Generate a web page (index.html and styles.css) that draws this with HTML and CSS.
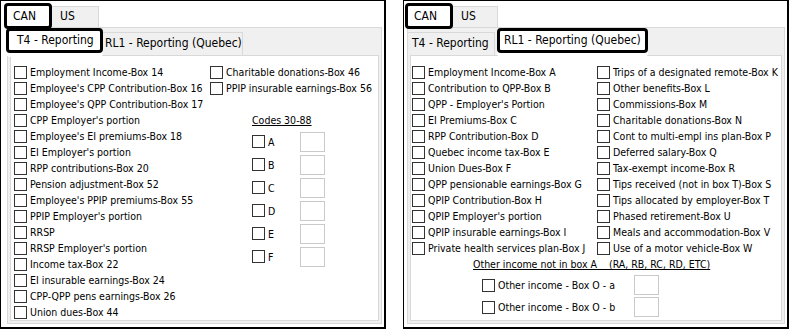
FILE: index.html
```html
<!DOCTYPE html>
<html lang="en">
<head>
    <meta charset="UTF-8">
    <meta name="viewport" content="width=device-width, initial-scale=1.0">
    <title>Reporting options</title>
    <link rel="stylesheet" href="styles.css">
</head>
<body>
    <div class="screens">

        <!-- T4 tab selected -->
        <div class="panel panel-t4">
            <div class="tabs">
                <div class="tab active tab-can">CAN</div>
                <div class="tab tab-us">US</div>
            </div>
            <div class="page">
                <div class="tabs sub">
                    <div class="tab active tab-t4">T4 - Reporting</div>
                    <div class="tab tab-rl1">RL1 - Reporting (Quebec)</div>
                </div>
                <div class="subpage">
                    <div class="col">
                        <label class="row"><span class="cb"></span>Employment Income-Box 14</label>
                        <label class="row"><span class="cb"></span>Employee's CPP Contribution-Box 16</label>
                        <label class="row"><span class="cb"></span>Employee's QPP Contribution-Box 17</label>
                        <label class="row"><span class="cb"></span>CPP Employer's portion</label>
                        <label class="row"><span class="cb"></span>Employee's EI premiums-Box 18</label>
                        <label class="row"><span class="cb"></span>EI Employer's portion</label>
                        <label class="row"><span class="cb"></span>RPP contributions-Box 20</label>
                        <label class="row"><span class="cb"></span>Pension adjustment-Box 52</label>
                        <label class="row"><span class="cb"></span>Employee's PPIP premiums-Box 55</label>
                        <label class="row"><span class="cb"></span>PPIP Employer's portion</label>
                        <label class="row"><span class="cb"></span>RRSP</label>
                        <label class="row"><span class="cb"></span>RRSP Employer's portion</label>
                        <label class="row"><span class="cb"></span>Income tax-Box 22</label>
                        <label class="row"><span class="cb"></span>EI insurable earnings-Box 24</label>
                        <label class="row"><span class="cb"></span>CPP-QPP pens earnings-Box 26</label>
                        <label class="row"><span class="cb"></span>Union dues-Box 44</label>
                    </div>
                    <div class="col">
                        <label class="row"><span class="cb"></span>Charitable donations-Box 46</label>
                        <label class="row"><span class="cb"></span>PPIP insurable earnings-Box 56</label>
                        <div class="codes">
                            <div class="codes-title">Codes 30-88</div>
                            <div class="code-row"><label class="row"><span class="cb"></span>A</label><span class="field"></span></div>
                            <div class="code-row"><label class="row"><span class="cb"></span>B</label><span class="field"></span></div>
                            <div class="code-row"><label class="row"><span class="cb"></span>C</label><span class="field"></span></div>
                            <div class="code-row"><label class="row"><span class="cb"></span>D</label><span class="field"></span></div>
                            <div class="code-row"><label class="row"><span class="cb"></span>E</label><span class="field"></span></div>
                            <div class="code-row"><label class="row"><span class="cb"></span>F</label><span class="field"></span></div>
                        </div>
                    </div>
                </div>
            </div>
        </div>

        <!-- RL1 tab selected -->
        <div class="panel panel-rl1">
            <div class="tabs">
                <div class="tab active tab-can">CAN</div>
                <div class="tab tab-us">US</div>
            </div>
            <div class="page">
                <div class="tabs sub">
                    <div class="tab tab-t4">T4 - Reporting</div>
                    <div class="tab active tab-rl1">RL1 - Reporting (Quebec)</div>
                </div>
                <div class="subpage">
                    <div class="col">
                        <label class="row"><span class="cb"></span>Employment Income-Box A</label>
                        <label class="row"><span class="cb"></span>Contribution to QPP-Box B</label>
                        <label class="row"><span class="cb"></span>QPP - Employer's Portion</label>
                        <label class="row"><span class="cb"></span>EI Premiums-Box C</label>
                        <label class="row"><span class="cb"></span>RPP Contribution-Box D</label>
                        <label class="row"><span class="cb"></span>Quebec income tax-Box E</label>
                        <label class="row"><span class="cb"></span>Union Dues-Box F</label>
                        <label class="row"><span class="cb"></span>QPP pensionable earnings-Box G</label>
                        <label class="row"><span class="cb"></span>QPIP Contribution-Box H</label>
                        <label class="row"><span class="cb"></span>QPIP Employer's portion</label>
                        <label class="row"><span class="cb"></span>QPIP insurable earnings-Box I</label>
                        <label class="row"><span class="cb"></span>Private health services plan-Box J</label>
                    </div>
                    <div class="col">
                        <label class="row"><span class="cb"></span>Trips of a designated remote-Box K</label>
                        <label class="row"><span class="cb"></span>Other benefits-Box L</label>
                        <label class="row"><span class="cb"></span>Commissions-Box M</label>
                        <label class="row"><span class="cb"></span>Charitable donations-Box N</label>
                        <label class="row"><span class="cb"></span>Cont to multi-empl ins plan-Box P</label>
                        <label class="row"><span class="cb"></span>Deferred salary-Box Q</label>
                        <label class="row"><span class="cb"></span>Tax-exempt income-Box R</label>
                        <label class="row"><span class="cb"></span>Tips received (not in box T)-Box S</label>
                        <label class="row"><span class="cb"></span>Tips allocated by employer-Box T</label>
                        <label class="row"><span class="cb"></span>Phased retirement-Box U</label>
                        <label class="row"><span class="cb"></span>Meals and accommodation-Box V</label>
                        <label class="row"><span class="cb"></span>Use of a motor vehicle-Box W</label>
                    </div>
                    <div class="other">
                        <div class="other-title">Other income not in box A    (RA, RB, RC, RD, ETC)</div>
                        <div class="other-row"><label class="row"><span class="cb"></span>Other income - Box O - a</label><span class="field"></span></div>
                        <div class="other-row"><label class="row"><span class="cb"></span>Other income - Box O - b</label><span class="field"></span></div>
                    </div>
                </div>
            </div>
        </div>

    </div>
</body>
</html>
```

FILE: styles.css
```css
body {
    margin: 0;
    font-family: "DejaVu Sans Condensed", "DejaVu Sans", sans-serif;
    font-size: 10.5px;
    color: #000;
    background: #fff;
}
.screens {
    display: flex;
    gap: 17px;
}
.panel {
    box-sizing: border-box;
    width: 386px;
    height: 329px;
    border: 1px solid #000;
    border-right-width: 2px;
    border-bottom-width: 2px;
    display: flex;
    flex-direction: column;
}

/* tab strips */
.tabs {
    display: flex;
    align-items: flex-end;
    padding: 2px 0 0 3px;
}
.tab {
    box-sizing: border-box;
    height: 21px;
    line-height: 19px;
    font-size: 12px;
    background: #f0f0f0;
    border: 1px solid #d9d9d9;
    border-bottom: none;
    padding: 0 0 0 8px;
    white-space: nowrap;
}
.tab.active {
    position: relative;
    z-index: 1;
    height: 26px;
    line-height: 20px;
    margin-bottom: -2px;
    background: #fff;
    border: 3px solid #000;
    border-radius: 4px;
    padding-left: 6px;
}
.tab-can { width: 48px; margin-right: -1px; }
.tab-us { width: 48px; }

.page {
    flex: 1;
    display: flex;
    flex-direction: column;
    margin: 0 2px 3px 6px;
    border: 1px solid #d9d9d9;
    background: #f0f0f0;
}
.tabs.sub {
    padding: 0;
    margin-left: -2px;
    height: 27px;
}
.sub .tab {
    height: 23px;
    line-height: 21px;
}
.sub .tab.active {
    height: 25px;
    line-height: 19px;
    margin-bottom: 2px;
    box-shadow: 0 4px 0 #fff;
}

.subpage {
    flex: 1;
    display: grid;
    grid-template-columns: 196px auto;
    align-content: start;
    margin: 0 2px 2px 2px;
    padding: 8px 0 0 3px;
    border: 1px solid #d9d9d9;
    background: #fff;
}

/* checkbox rows */
.row {
    display: flex;
    align-items: center;
    gap: 3px;
    height: 16px;
    white-space: nowrap;
}
.cb {
    flex: none;
    width: 11px;
    height: 11px;
    border: 1px solid #333;
    background: #fff;
}
.field {
    box-sizing: border-box;
    width: 25px;
    height: 20px;
    border: 1px solid #cacaca;
    background: #fff;
}

/* T4 codes block */
.codes {
    margin: 16px 0 0 42px;
}
.codes-title {
    height: 16px;
    line-height: 16px;
    text-decoration: underline;
    margin-bottom: 2px;
}
.code-row {
    display: flex;
    align-items: center;
    height: 23px;
}
.code-row .row {
    width: 48px;
}

/* T4 panel tabs */
.panel-t4 .tab-t4 { width: 97px; padding-left: 8px; }
.panel-t4 .tab-rl1 { width: 141px; margin-left: -1px; padding-left: 2px; }

/* RL1 panel */
.panel-rl1 .tabs { padding-left: 1px; }
.panel-rl1 .tab-us { width: 46px; }
.panel-rl1 .page { margin-left: 3px; }
.panel-rl1 .subpage {
    grid-template-columns: 185px auto;
    padding-left: 1px;
}
.panel-rl1 .tab-t4 { width: 88px; padding-left: 4px; }
.panel-rl1 .tab-rl1 { width: 151px; margin-left: 2px; padding-left: 4px; }

.other {
    grid-column: 1 / -1;
}
.other-title {
    margin-left: 61px;
    height: 16px;
    line-height: 16px;
    text-decoration: underline;
    white-space: pre;
    margin-bottom: 2px;
}
.other-row {
    display: flex;
    align-items: center;
    height: 22px;
    margin-left: 70px;
}
.other-row .row {
    width: 152px;
}
```
